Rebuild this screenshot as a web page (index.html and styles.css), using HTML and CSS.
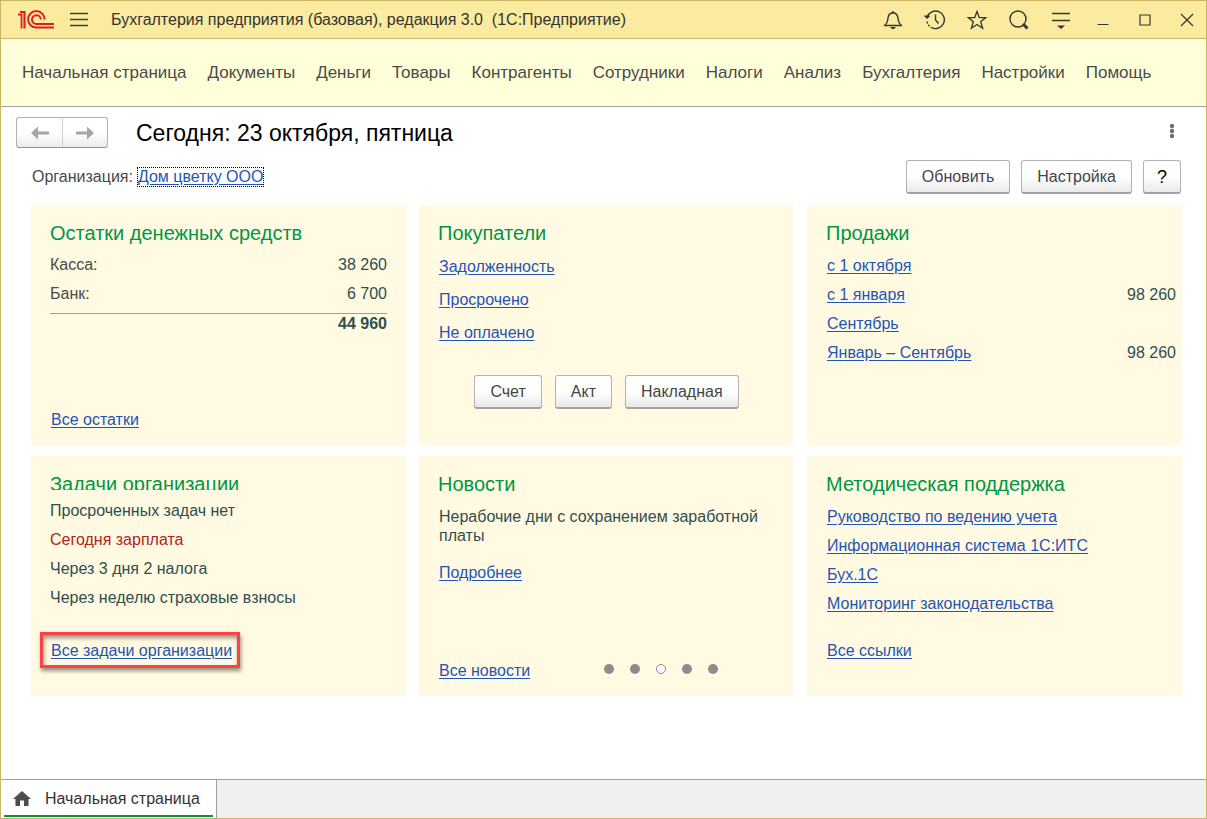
FILE: index.html
```html
<!DOCTYPE html>
<html lang="ru">
<head>
<meta charset="utf-8">
<title>Бухгалтерия предприятия</title>
<link rel="stylesheet" href="styles.css">
</head>
<body>
<div class="window">
  <header class="titlebar">
    <svg class="logo" width="38" height="20" viewBox="0 0 38 20" fill="none" stroke="#dc2022" stroke-width="2">
      <path d="M1 4.500H4.500V18.500" stroke-width="1.800"/>
      <path d="M3 2H7.500V18.500" stroke-width="2.200"/>
      <path d="M27.500 9.500A8.200 8.200 0 1 0 19.500 17.500H37"/>
      <path d="M23.800 9.500A4.400 4.400 0 1 0 19.500 14H37"/>
    </svg>
    <button class="menu-button" aria-label="Меню">
      <svg width="18" height="16" viewBox="0 0 18 16" stroke="#40403a" stroke-width="1.500"><path d="M0 1.500H18M0 7.500H18M0 13.500H18"/></svg>
    </button>
    <span class="app-title">Бухгалтерия предприятия (базовая), редакция 3.0&nbsp; (1С:Предприятие)</span>
    <div class="window-tools">
      <button class="tool" aria-label="Уведомления"><svg width="20" height="20" viewBox="0 0 20 20" fill="none" stroke="#363636" stroke-width="1.400"><path d="M1.500 15.500C5 13 4.500 11 5 8C5.500 4.800 7 3 10 2.800C13 3 14.500 4.800 15 8C15.500 11 15 13 18.500 15.500Z" stroke-linejoin="round"/><path d="M10 3V1"/><path d="M7 17H13L11 19H9Z" fill="#363636" stroke="none"/></svg></button>
      <button class="tool" aria-label="История"><svg width="22" height="20" viewBox="0 0 22 20" fill="none" stroke="#363636" stroke-width="1.400"><path d="M3.200 7A8.800 8.800 0 1 1 7 17.300"/><path d="M3 11.500C3.500 14 4.500 15.500 7 17.300" stroke-dasharray="2 1.500"/><path d="M11.500 4.500V10L14.500 13.500"/><path d="M0.500 6H5.500L3.200 8.500Z" fill="#363636" stroke-width="1"/></svg></button>
      <button class="tool" aria-label="Избранное"><svg width="20" height="20" viewBox="0 0 20 20" fill="none" stroke="#363636" stroke-width="1.300"><path d="M10 1.500L12.300 7.600H18.800L13.700 11.700L15.600 18.300L10 14.500L4.400 18.300L6.300 11.700L1.200 7.600H7.700Z"/></svg></button>
      <button class="tool" aria-label="Поиск"><svg width="20" height="20" viewBox="0 0 20 20" fill="none" stroke="#363636" stroke-width="1.400"><circle cx="9" cy="9" r="8"/><path d="M14 14L18.500 18.500" stroke-width="3"/></svg></button>
      <button class="tool" aria-label="Сервис"><svg width="20" height="20" viewBox="0 0 20 20" fill="none" stroke="#363636" stroke-width="1.400"><path d="M1 3.500H19M1 10.500H19"/><path d="M6 15.500H14L10 19Z" fill="#363636" stroke="none"/></svg></button>
      <button class="tool" aria-label="Свернуть"><svg width="12" height="12" viewBox="0 0 12 12" stroke="#363636"><path d="M0.500 10.500H11.500"/></svg></button>
      <button class="tool" aria-label="Развернуть"><svg width="12" height="12" viewBox="0 0 12 12" fill="none" stroke="#363636" stroke-width="1.200"><path d="M1 1H11V11H1Z"/></svg></button>
      <button class="tool" aria-label="Закрыть"><svg width="14" height="14" viewBox="0 0 14 14" stroke="#363636" stroke-width="1.300"><path d="M1 1L13 13M13 1L1 13"/></svg></button>
    </div>
  </header>
  <nav class="sections">
    <a href="#">Начальная страница</a><a href="#">Документы</a><a href="#">Деньги</a><a href="#">Товары</a><a href="#">Контрагенты</a><a href="#">Сотрудники</a><a href="#">Налоги</a><a href="#">Анализ</a><a href="#">Бухгалтерия</a><a href="#">Настройки</a><a href="#">Помощь</a>
  </nav>
  <main class="page">
    <div class="page-head">
      <div class="history">
        <button aria-label="Назад"><svg width="18" height="14" viewBox="0 0 18 14"><path d="M0 7L7 0.500V5.500H18V8.500H7V13.500Z" fill="#a6a6a6"/></svg></button>
        <button aria-label="Вперед"><svg width="18" height="14" viewBox="0 0 18 14"><path d="M18 7L11 0.500V5.500H0V8.500H11V13.500Z" fill="#a6a6a6"/></svg></button>
      </div>
      <h1>Сегодня: 23 октября, пятница</h1>
      <button class="more" aria-label="Еще"><svg width="6" height="16" viewBox="0 0 6 16" fill="#6e6e6e"><circle cx="3" cy="3" r="2.200"/><circle cx="3" cy="8" r="2.200"/><circle cx="3" cy="13" r="2.200"/></svg></button>
    </div>
    <div class="org-row">
      <span>Организация:</span>
      <a class="org-link" href="#">Дом цветку ООО</a>
      <div class="actions">
        <button class="btn">Обновить</button>
        <button class="btn">Настройка</button>
        <button class="btn help">?</button>
      </div>
    </div>
    <div class="cards">
      <section class="card">
        <h2>Остатки денежных средств</h2>
        <table class="balances">
          <tbody>
            <tr><th scope="row">Касса:</th><td>38 260</td></tr>
            <tr><th scope="row">Банк:</th><td>6 700</td></tr>
          </tbody>
        </table>
        <div class="total">44 960</div>
        <div class="card-foot"><a href="#">Все остатки</a></div>
      </section>
      <section class="card">
        <h2>Покупатели</h2>
        <ul class="list loose">
          <li><a href="#">Задолженность</a></li>
          <li><a href="#">Просрочено</a></li>
          <li><a href="#">Не оплачено</a></li>
        </ul>
        <div class="create">
          <button class="btn">Счет</button>
          <button class="btn">Акт</button>
          <button class="btn">Накладная</button>
        </div>
      </section>
      <section class="card">
        <h2>Продажи</h2>
        <ul class="list sales">
          <li><a href="#">с 1 октября</a></li>
          <li><a href="#">с 1 января</a><span>98 260</span></li>
          <li><a href="#">Сентябрь</a></li>
          <li><a href="#">Январь – Сентябрь</a><span>98 260</span></li>
        </ul>
      </section>
      <section class="card tasks">
        <h2>Задачи организации</h2>
        <ul class="list">
          <li>Просроченных задач нет</li>
          <li class="alert">Сегодня зарплата</li>
          <li>Через 3 дня 2 налога</li>
          <li>Через неделю страховые взносы</li>
        </ul>
        <div class="card-foot raised"><a class="marked" href="#">Все задачи организации</a></div>
      </section>
      <section class="card">
        <h2>Новости</h2>
        <p class="news">Нерабочие дни с сохранением заработной платы</p>
        <p class="news-more"><a href="#">Подробнее</a></p>
        <div class="card-foot">
          <a href="#">Все новости</a>
          <div class="dots">
            <button aria-label="Новость 1"></button><button aria-label="Новость 2"></button><button class="current" aria-label="Новость 3"></button><button aria-label="Новость 4"></button><button aria-label="Новость 5"></button>
          </div>
        </div>
      </section>
      <section class="card">
        <h2>Методическая поддержка</h2>
        <ul class="list">
          <li><a href="#">Руководство по ведению учета</a></li>
          <li><a href="#">Информационная система 1С:ИТС</a></li>
          <li><a href="#">Бух.1С</a></li>
          <li><a href="#">Мониторинг законодательства</a></li>
        </ul>
        <div class="card-foot raised"><a href="#">Все ссылки</a></div>
      </section>
    </div>
  </main>
  <footer class="tabs">
    <a class="tab" href="#">
      <svg width="18" height="16" viewBox="0 0 18 16"><path d="M9 0L18 8H15.500V15H11V9.500H7V15H2.500V8H0Z" fill="#4c4c4c"/></svg>
      <span>Начальная страница</span>
    </a>
  </footer>
</div>
</body>
</html>
```
FILE: styles.css
```css
* {
  box-sizing: border-box;
}

body {
  margin: 0;
  color: #2f4f4f;
  font: 16px/20px "Liberation Sans", Arial, sans-serif;
}

button {
  padding: 0;
  border: 0;
  background: none;
  color: #444;
  font: inherit;
}

a {
  color: #1f55b5;
  text-underline-offset: 2px;
}

h1, h2, p, ul {
  margin: 0;
  padding: 0;
  font-weight: normal;
}

svg {
  display: block;
}

.window {
  display: flex;
  flex-direction: column;
  min-height: 100vh;
  border: 1px solid #c8b664;
  background: #fff;
}

.titlebar {
  display: flex;
  align-items: center;
  height: 38px;
  padding-left: 16px;
  border-bottom: 1px solid #c8b664;
  background: #fbeb9e;
  color: #333;
}

.menu-button {
  margin: 0 23px 0 15px;
}

.app-title {
  white-space: nowrap;
}

.window-tools {
  display: flex;
  gap: 4px;
  margin-left: auto;
}

.tool {
  display: flex;
  align-items: center;
  justify-content: center;
  width: 38px;
  height: 36px;
}

.sections {
  display: flex;
  align-items: center;
  gap: 21px;
  height: 68px;
  padding: 0 21px;
  border-bottom: 1px solid #a0a0a0;
  background: #ffffd9;
  white-space: nowrap;
}

.sections a {
  color: #4a4a4a;
  font-size: 17px;
  text-decoration: none;
}

.page {
  flex: 1;
  padding: 10px 24px 24px 30px;
}

.page-head {
  display: flex;
  align-items: center;
  margin-left: -15px;
}

.history {
  display: flex;
  border: 1px solid #b2b2b2;
  border-bottom-color: #969696;
  border-radius: 3px;
  background: linear-gradient(#fff 50%, #ebebeb);
}

.history button {
  display: flex;
  align-items: center;
  justify-content: center;
  width: 45px;
  height: 29px;
}

.history button + button {
  border-left: 1px solid #d0d0d0;
}

h1 {
  margin-left: 28px;
  color: #000;
  font-size: 23px;
  line-height: 28px;
}

.more {
  margin: 0 7px 3px auto;
}

.org-row {
  display: flex;
  align-items: center;
  margin: 12px 0 11px;
  padding-left: 1px;
  color: #4a4a4a;
}

.org-link {
  margin-left: 5px;
  outline: 1px dotted #000;
  line-height: 18px;
}

.actions {
  display: flex;
  gap: 11px;
  margin: 0 1px 0 auto;
}

.btn {
  height: 34px;
  padding: 0 15px;
  border: 1px solid #b2b2b2;
  border-bottom: 2px solid #a2a2a2;
  border-radius: 3px;
  background: linear-gradient(#fff 50%, #e9e9e9);
}

.help {
  width: 38px;
  padding: 0;
  color: #000;
  font-size: 18px;
}

.cards {
  display: grid;
  grid-template-columns: repeat(3, 1fr);
  grid-auto-rows: minmax(240px, auto);
  gap: 11px 13px;
}

.card {
  display: flex;
  flex-direction: column;
  padding: 16px 19px 15px;
  background: #fffae1;
}

h2 {
  flex: none;
  color: #009646;
  font-size: 20px;
  line-height: 24px;
}

.balances {
  margin-top: 5px;
  border-spacing: 0;
}

.balances th,
.balances td {
  height: 29px;
  padding: 0;
  font-weight: normal;
  text-align: right;
}

.balances th {
  color: #4a4a4a;
  text-align: left;
}

.total {
  margin-top: 5px;
  border-top: 1px solid #a0a090;
  font-weight: bold;
  text-align: right;
}

.list {
  margin-top: 6px;
  padding-left: 1px;
  line-height: 29px;
  list-style: none;
}

.loose {
  margin-top: 5px;
  line-height: 33px;
}

.sales {
  margin-right: -13px;
}

.sales li {
  display: flex;
  justify-content: space-between;
}

.create {
  display: flex;
  justify-content: center;
  gap: 13px;
  margin-top: 26px;
}

.tasks h2 {
  height: 18px;
  overflow: hidden;
}

.tasks .list {
  padding-left: 0;
}

.alert {
  color: #b22222;
}

.news {
  margin-top: 11px;
  padding-left: 1px;
  line-height: 19px;
}

.news-more {
  margin-top: 18px;
  padding-left: 1px;
}

.card-foot {
  display: flex;
  align-items: center;
  gap: 74px;
  margin-top: auto;
  padding-left: 1px;
}

.raised {
  margin-bottom: 20px;
}

.marked {
  position: relative;
}

.marked::after {
  content: "";
  position: absolute;
  inset: -9px -8px -7px -11px;
  border: 3px solid #fb4347;
  box-shadow: 1px 3px 4px #0000006b, inset 1px 3px 4px #0000006b;
}

.dots {
  display: flex;
  gap: 16px;
  margin-bottom: 4px;
}

.dots button {
  width: 10px;
  height: 10px;
  border-radius: 50%;
  background: #8c8c8c;
}

.dots .current {
  border: 1px solid #8c8c8c;
  background: #fff;
}

.tabs {
  display: flex;
  border-top: 1px solid #a0a0a0;
  background: #f0f0f0;
}

.tab {
  display: flex;
  align-items: center;
  gap: 14px;
  height: 38px;
  padding: 0 16px 0 12px;
  border-right: 1px solid #a0a0a0;
  background: linear-gradient(#009646, #009646) 3px 35px / calc(100% - 6px) 2px no-repeat #fff;
  color: #333;
  text-decoration: none;
}
```
